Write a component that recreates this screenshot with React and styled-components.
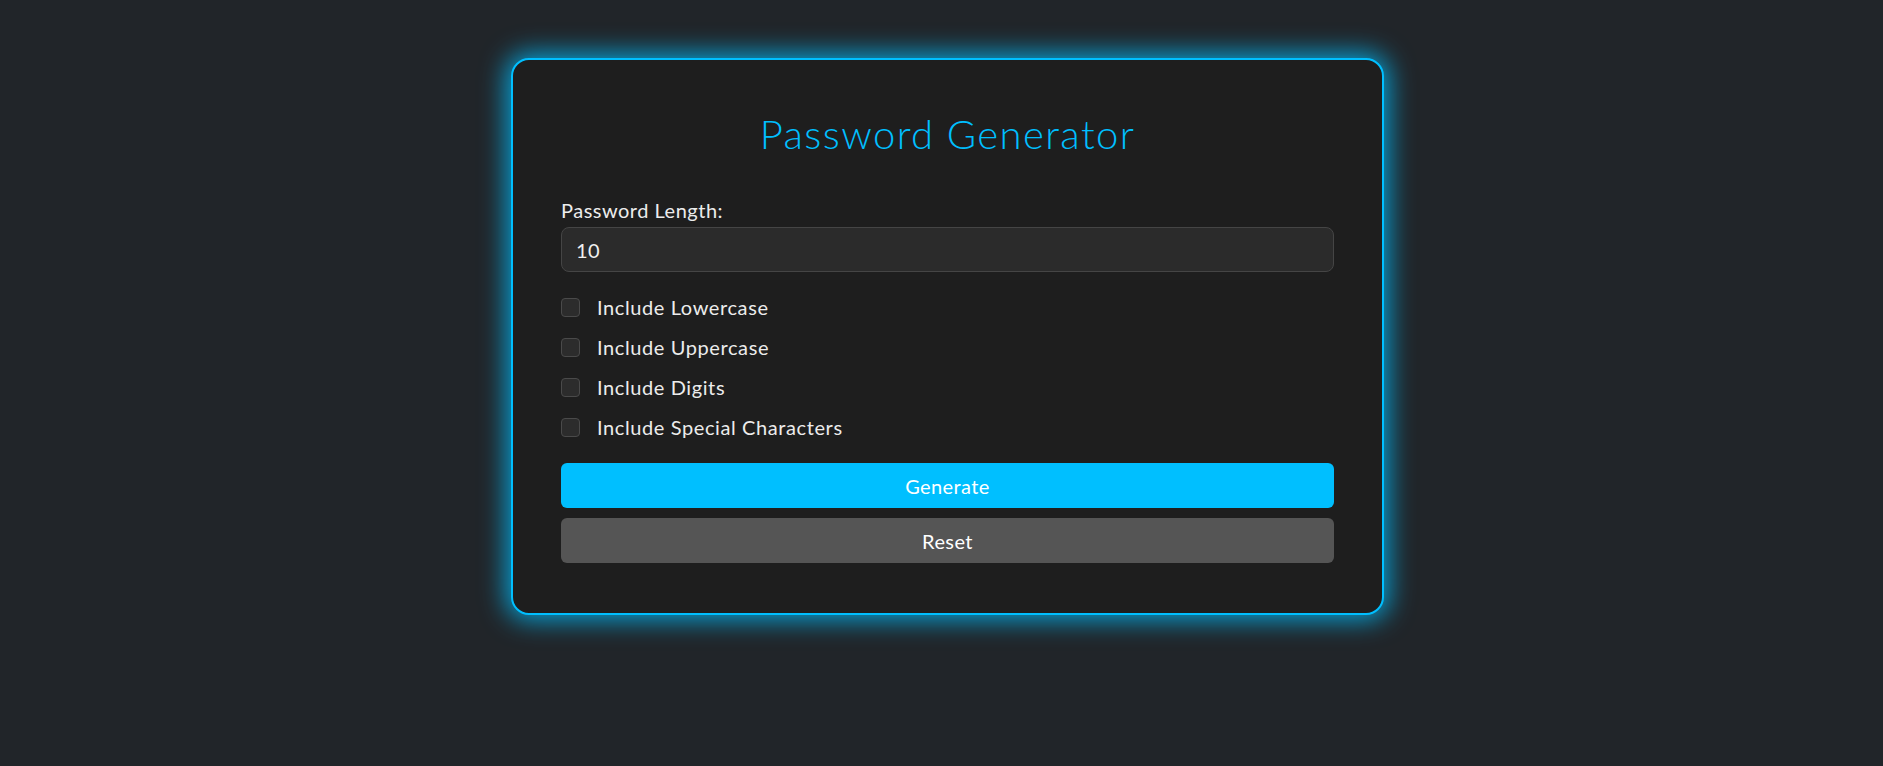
import React, { useState } from "react";
import styled, { createGlobalStyle } from "styled-components";

const GlobalStyle = createGlobalStyle`
  * {
    box-sizing: border-box;
  }

  body {
    margin: 0;
    background-color: #212529;
    font-family: "Lato", "Noto Sans", sans-serif;
    color: #e6e6e6;
  }
`;

const OPTIONS = [
  { key: "lower", label: "Include Lowercase" },
  { key: "upper", label: "Include Uppercase" },
  { key: "digits", label: "Include Digits" },
  { key: "special", label: "Include Special Characters" }
];

const Page = styled.div`
  display: flex;
  justify-content: center;
  padding: 58px 0 40px 12px;
  min-height: 766px;
`;

const Card = styled.div`
  width: 873px;
  padding: 48px 48px 50px;
  background-color: #1e1e1e;
  border: 2px solid #00bfff;
  border-radius: 18px;
  box-shadow: 0 0 26px 5px rgba(0, 191, 255, 0.8);
  align-self: flex-start;
`;

const Title = styled.h1`
  margin: 2px 0 40px;
  text-align: center;
  font-size: 40px;
  font-weight: 300;
  line-height: 48px;
  letter-spacing: 1.4px;
  color: #00bfff;
`;

const Label = styled.label`
  display: block;
  margin-bottom: 5px;
  font-size: 20px;
  line-height: 24px;
  letter-spacing: 0.5px;
  color: #ececec;
`;

const LengthInput = styled.input`
  display: block;
  width: 100%;
  height: 45px;
  padding: 0 14px;
  margin-bottom: 15px;
  font-family: inherit;
  font-size: 20px;
  letter-spacing: 0.5px;
  color: #f0f0f0;
  background-color: #2b2b2b;
  border: 1px solid #454545;
  border-radius: 8px;
  outline: none;
`;

const CheckRow = styled.label`
  display: flex;
  align-items: center;
  height: 40px;
  font-size: 20px;
  letter-spacing: 0.6px;
  color: #ececec;
  cursor: pointer;
`;

const Box = styled.input`
  appearance: none;
  width: 19px;
  height: 19px;
  margin: 0 17px 0 0;
  background-color: #2c2c2c;
  border: 1px solid #4a4a4a;
  border-radius: 4px;
  cursor: pointer;

  &:checked {
    background-color: #00bfff;
    border-color: #00bfff;
  }
`;

const Button = styled.button`
  display: block;
  width: 100%;
  height: 45px;
  margin-top: ${(p) => (p.$first ? "16px" : "10px")};
  font-family: inherit;
  font-size: 20px;
  letter-spacing: 0.4px;
  color: #ffffff;
  background-color: ${(p) => (p.$secondary ? "#555555" : "#00bfff")};
  border: none;
  border-radius: 6px;
  cursor: pointer;
`;

export default function App() {
  const [length, setLength] = useState("10");
  const [checks, setChecks] = useState({});

  const toggle = (key) => setChecks({ ...checks, [key]: !checks[key] });

  return (
    <>
      <GlobalStyle />
      <Page>
        <Card>
          <Title>Password Generator</Title>
          <Label htmlFor="len">Password Length:</Label>
          <LengthInput
            id="len"
            type="text"
            value={length}
            onChange={(e) => setLength(e.target.value)}
          />
          {OPTIONS.map(({ key, label }) => (
            <CheckRow key={key}>
              <Box
                type="checkbox"
                checked={!!checks[key]}
                onChange={() => toggle(key)}
              />
              {label}
            </CheckRow>
          ))}
          <Button $first>Generate</Button>
          <Button
            $secondary
            onClick={() => {
              setLength("10");
              setChecks({});
            }}
          >
            Reset
          </Button>
        </Card>
      </Page>
    </>
  );
}
